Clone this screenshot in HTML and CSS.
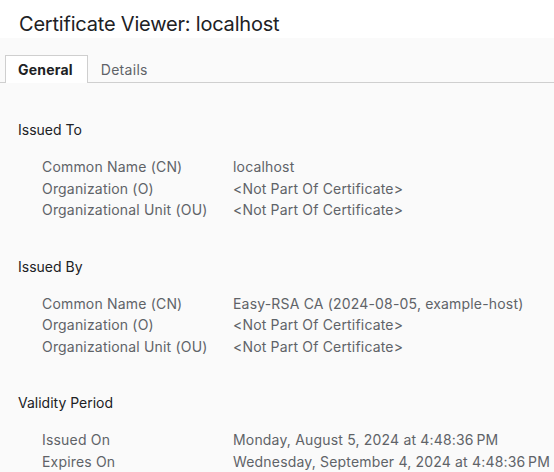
FILE: index.html
```html
<!DOCTYPE html>
<html lang="en">
<head>
<meta charset="utf-8">
<title>Certificate Viewer: localhost</title>
<link rel="stylesheet" href="styles.css">
</head>
<body>
<div class="dialog">
  <header class="header">
    <h1 class="title">Certificate Viewer: localhost</h1>
  </header>
  <nav class="tabs">
    <div class="tab tab-active">General</div>
    <div class="tab">Details</div>
  </nav>
  <main class="content">
    <section class="section">
      <h2 class="section-title">Issued To</h2>
      <dl class="fields">
        <dt>Common Name (CN)</dt><dd>localhost</dd>
        <dt>Organization (O)</dt><dd>&lt;Not Part Of Certificate&gt;</dd>
        <dt>Organizational Unit (OU)</dt><dd>&lt;Not Part Of Certificate&gt;</dd>
      </dl>
    </section>
    <section class="section">
      <h2 class="section-title">Issued By</h2>
      <dl class="fields">
        <dt>Common Name (CN)</dt><dd>Easy-RSA CA (2024-08-05, example-host)</dd>
        <dt>Organization (O)</dt><dd>&lt;Not Part Of Certificate&gt;</dd>
        <dt>Organizational Unit (OU)</dt><dd>&lt;Not Part Of Certificate&gt;</dd>
      </dl>
    </section>
    <section class="section">
      <h2 class="section-title">Validity Period</h2>
      <dl class="fields">
        <dt>Issued On</dt><dd>Monday, August 5, 2024 at 4:48:36&#8239;PM</dd>
        <dt>Expires On</dt><dd>Wednesday, September 4, 2024 at 4:48:36&#8239;PM</dd>
      </dl>
    </section>
  </main>
</div>
</body>
</html>
```

FILE: styles.css
```css
* { box-sizing: border-box; }
html, body {
  margin: 0;
  padding: 0;
  background: #fafafa;
  font-family: Inter, "Liberation Sans", Arial, sans-serif;
  color: #202124;
}
.dialog {
  display: flex;
  flex-direction: column;
  min-height: 472px;
}
.header {
  background: #ffffff;
  height: 38px;
  padding: 12px 0 0 19px;
}
.title {
  margin: 0;
  font-size: 20px;
  line-height: 24px;
  font-weight: 400;
  letter-spacing: -0.2px;
  color: #202124;
}
.tabs {
  display: flex;
  padding: 17px 0 0 5px;
  height: 45px;
  border-bottom: 1px solid #cfcfcf;
  background: #fafafa;
}
.tab {
  height: 28px;
  padding: 0 12px;
  border: 1px solid transparent;
  border-bottom: none;
  font-size: 14px;
  line-height: 27px;
  letter-spacing: 0.3px;
  color: #5f6368;
}
.tab-active {
  background: #ffffff;
  border-color: #cfcfcf;
  color: #202124;
  font-weight: 700;
  letter-spacing: 0.2px;
  padding-right: 14px;
  margin-bottom: -1px;
  height: 28px;
}
.content {
  padding: 37px 0 0 18px;
  display: flex;
  flex-direction: column;
  gap: 36px;
}
.section-title {
  margin: 0 0 16px 0;
  font-size: 14px;
  line-height: 20px;
  font-weight: 400;
  color: #202124;
}
.fields {
  margin: 0;
  padding-left: 24px;
  display: grid;
  grid-template-columns: 191px 1fr;
  font-size: 14px;
  line-height: 21.5px;
  letter-spacing: 0.18px;
  color: #5f6368;
}
.fields dt, .fields dd {
  margin: 0;
  white-space: nowrap;
}
```
